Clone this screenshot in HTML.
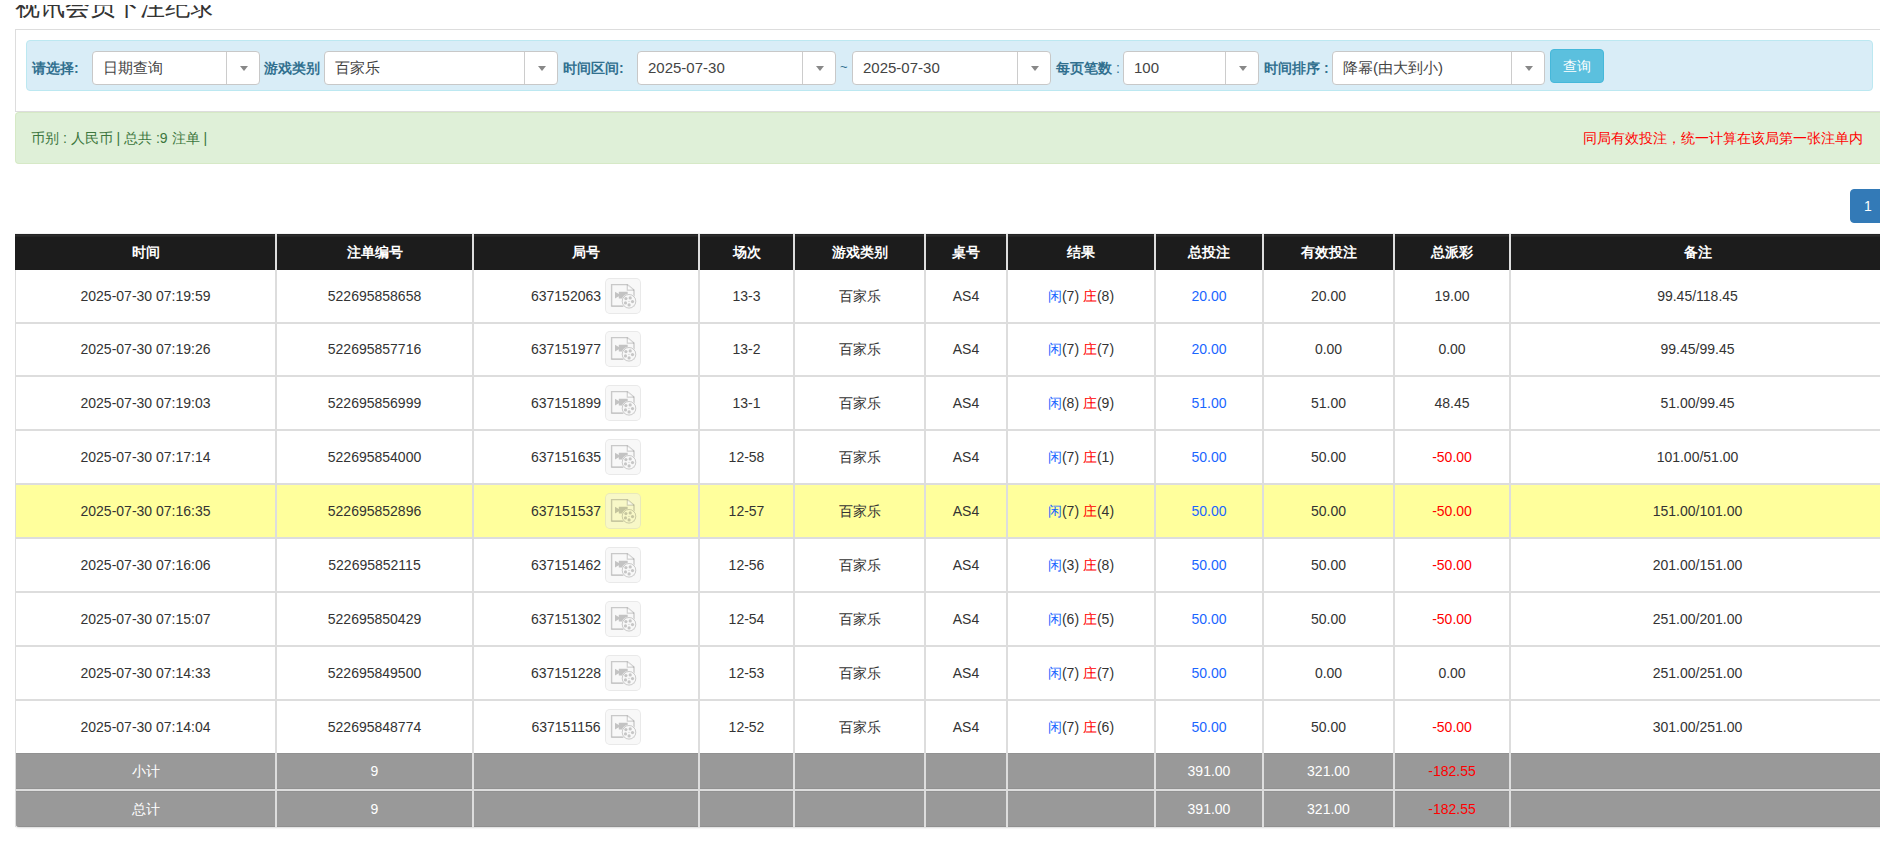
<!DOCTYPE html>
<html><head><meta charset="utf-8">
<style>
html,body{margin:0;padding:0;}
body{width:1880px;height:845px;overflow:hidden;position:relative;background:#fff;font-family:"Liberation Sans",sans-serif;color:#333;font-size:14px;}
div,span{box-sizing:border-box;}
.a{position:absolute;}
.title{position:absolute;left:15px;top:-10px;font-size:25px;line-height:32px;color:#333;white-space:nowrap;}
.panel{position:absolute;left:15px;top:29px;width:1900px;height:83px;border:1px solid #ddd;border-right:none;background:#fff;}
.bar{position:absolute;left:26px;top:40px;width:1847px;height:51px;background:#d9edf7;border:1px solid #bce8f1;border-radius:4px;}
.lbl{position:absolute;top:59px;font-size:14px;line-height:18px;font-weight:bold;color:#31708f;white-space:nowrap;}
.sel{position:absolute;top:51px;height:34px;background:#fff;border:1px solid #c8c8c8;border-radius:4px;}
.sel .tx{position:absolute;left:10px;top:0;line-height:32px;font-size:15px;color:#444;white-space:nowrap;}
.sel .dv{position:absolute;top:0;bottom:0;width:1px;background:#ccc;}
.sel .ar{position:absolute;top:14px;width:0;height:0;border-left:4px solid transparent;border-right:4px solid transparent;border-top:5px solid #888;}
.btn{position:absolute;left:1550px;top:49px;width:54px;height:34px;background:#5bc0de;border:1px solid #46b8da;border-radius:4px;color:#fff;font-size:14px;line-height:32px;text-align:center;}
.alert{position:absolute;left:15px;top:112px;width:1900px;height:52px;background:#dff0d8;border:1px solid #d6e9c6;border-right:none;border-radius:4px 0 0 4px;}
.al{position:absolute;left:31px;top:129px;font-size:14px;line-height:18px;color:#3c763d;white-space:nowrap;}
.ar2{position:absolute;right:18px;top:129px;font-size:14px;line-height:18px;color:#f00;white-space:nowrap;}
.pg{position:absolute;left:1850px;top:189px;width:40px;height:34px;background:#337ab7;border:1px solid #337ab7;border-radius:4px;color:#fff;font-size:14px;line-height:32px;padding-left:13px;}
.th{position:absolute;background:linear-gradient(#232323 0,#232323 1px,#2c2c2c 1px,#2c2c2c 2px,#252525 2px,#252525 3px,#1c1c1c 3px,#1c1c1c 100%);box-shadow:0 -1px 0 #f2f2f2;}
.hc{position:absolute;text-align:center;color:#fff;font-weight:bold;font-size:14px;white-space:nowrap;}
.rb{position:absolute;left:15px;width:1869px;}
.hl{position:absolute;left:15px;width:1869px;height:2px;background:#ddd;}
.vl{position:absolute;width:2px;background:#ddd;}
.vl1{position:absolute;width:1px;background:#ddd;}
.c{position:absolute;text-align:center;white-space:nowrap;font-size:14px;color:#333;}
.c2{}
.ib{display:inline-block;vertical-align:middle;width:36px;height:36px;margin-left:4px;border:1px solid rgba(0,0,0,.06);border-radius:5px;position:relative;top:-1px;background:rgba(241,241,241,.5);}
.ib svg{position:absolute;left:-1px;top:-1px;}
.gr{position:absolute;left:16px;width:1868px;background:#999;border-top:1px solid #919191;}
.gc{position:absolute;text-align:center;color:#fff;font-size:14px;white-space:nowrap;}
.bl{color:#1a66ff;}
.rd{color:#f00;}
</style></head>
<body>
<svg width="0" height="0" style="position:absolute"><defs><mask id="rm" maskUnits="userSpaceOnUse" x="0" y="0" width="36" height="36"><rect x="0" y="0" width="36" height="36" fill="#fff"/><circle cx="24" cy="23.3" r="7.6" fill="#000"/></mask></defs></svg>
<div class="title">视讯会员下注纪录</div>
<div class="a" style="left:0;top:0;width:1880px;height:5px;background:#fff"></div>
<div class="panel"></div>
<div class="bar"></div>

<div class="lbl" style="left:32px">请选择:</div>
<div class="sel" style="left:92px;width:168px"><span class="tx">日期查询</span><span class="dv" style="left:133px"></span><span class="ar" style="left:147px"></span></div>

<div class="lbl" style="left:264px">游戏类别</div>
<div class="sel" style="left:324px;width:234px"><span class="tx">百家乐</span><span class="dv" style="left:199px"></span><span class="ar" style="left:213px"></span></div>

<div class="lbl" style="left:563px">时间区间:</div>
<div class="sel" style="left:637px;width:199px"><span class="tx">2025-07-30</span><span class="dv" style="left:164px"></span><span class="ar" style="left:178px"></span></div>
<div class="a" style="left:840px;top:58px;font-size:13px;line-height:18px;color:#31708f">~</div>
<div class="sel" style="left:852px;width:199px"><span class="tx">2025-07-30</span><span class="dv" style="left:164px"></span><span class="ar" style="left:178px"></span></div>

<div class="lbl" style="left:1056px">每页笔数<span style="font-weight:normal"> :</span></div>
<div class="sel" style="left:1123px;width:136px"><span class="tx">100</span><span class="dv" style="left:101px"></span><span class="ar" style="left:115px"></span></div>

<div class="lbl" style="left:1264px">时间排序 :</div>
<div class="sel" style="left:1332px;width:213px"><span class="tx">降幂(由大到小)</span><span class="dv" style="left:178px"></span><span class="ar" style="left:192px"></span></div>

<div class="btn">查询</div>

<div class="alert"></div>
<div class="al">币别 : 人民币 | 总共 :9 注单 |</div>
<div class="a" style="left:1583px;top:129px;font-size:14px;line-height:18px;color:#f00;white-space:nowrap">同局有效投注，统一计算在该局第一张注单内</div>

<div class="pg">1</div>

<div class="rb" style="top:270px;height:52px;background:#fff"></div>
<div class="rb" style="top:323px;height:52px;background:#fff"></div>
<div class="rb" style="top:377px;height:52px;background:#fff"></div>
<div class="rb" style="top:431px;height:52px;background:#fff"></div>
<div class="rb" style="top:485px;height:52px;background:#ffff9c"></div>
<div class="rb" style="top:539px;height:52px;background:#fff"></div>
<div class="rb" style="top:593px;height:52px;background:#fff"></div>
<div class="rb" style="top:647px;height:52px;background:#fff"></div>
<div class="rb" style="top:701px;height:52px;background:#fff"></div>
<div class="gr" style="top:753px;height:36px;border-bottom:1px solid #919191;"></div>
<div class="gr" style="top:791px;height:36px;border-bottom:1px solid #8f8f8f;border-radius:0 0 0 3px;box-shadow:0 1px 2px rgba(0,0,0,.15);"></div>
<div class="hl" style="top:322px"></div>
<div class="hl" style="top:375px"></div>
<div class="hl" style="top:429px"></div>
<div class="hl" style="top:483px"></div>
<div class="hl" style="top:537px"></div>
<div class="hl" style="top:591px"></div>
<div class="hl" style="top:645px"></div>
<div class="hl" style="top:699px"></div>
<div class="th" style="left:15px;top:234px;width:1869px;height:36px"></div>
<div class="hc" style="left:16px;top:234px;width:259px;height:36px;line-height:36px">时间</div>
<div class="hc" style="left:277px;top:234px;width:195px;height:36px;line-height:36px">注单编号</div>
<div class="hc" style="left:474px;top:234px;width:224px;height:36px;line-height:36px">局号</div>
<div class="hc" style="left:700px;top:234px;width:93px;height:36px;line-height:36px">场次</div>
<div class="hc" style="left:795px;top:234px;width:129px;height:36px;line-height:36px">游戏类别</div>
<div class="hc" style="left:926px;top:234px;width:80px;height:36px;line-height:36px">桌号</div>
<div class="hc" style="left:1008px;top:234px;width:146px;height:36px;line-height:36px">结果</div>
<div class="hc" style="left:1156px;top:234px;width:106px;height:36px;line-height:36px">总投注</div>
<div class="hc" style="left:1264px;top:234px;width:129px;height:36px;line-height:36px">有效投注</div>
<div class="hc" style="left:1395px;top:234px;width:114px;height:36px;line-height:36px">总派彩</div>
<div class="hc" style="left:1511px;top:234px;width:373px;height:36px;line-height:36px">备注</div>
<div class="c" style="left:16px;top:270px;width:259px;height:52px;line-height:52px">2025-07-30 07:19:59</div>
<div class="c" style="left:277px;top:270px;width:195px;height:52px;line-height:52px">522695858658</div>
<div class="c c2" style="left:474px;top:270px;width:224px;height:52px;line-height:52px">637152063<span class="ib"><svg width="36" height="36" viewBox="0 0 36 36"><g mask="url(#rm)"><path d="M6.6 6.6H22.3L29 12.2V28.1H6.6Z" fill="none" stroke="rgba(0,0,0,.19)" stroke-width="1.4"/><path d="M6.6 28.1H29" stroke="rgba(0,0,0,.07)" stroke-width="1.6"/><path d="M22.3 6.6V12.2H29" fill="rgba(255,255,255,.55)" stroke="rgba(0,0,0,.17)" stroke-width="1.2"/><path d="M10 13.8L13.8 16V13.8H22.7V20.4H13.8V18.2L10 20.4Z" fill="rgba(0,0,0,.21)"/></g><circle cx="24" cy="23.3" r="6.8" fill="none" stroke="rgba(0,0,0,.19)" stroke-width="1"/><g fill="rgba(0,0,0,.2)"><circle cx="20.9" cy="20.6" r="1.6"/><circle cx="25.2" cy="19.9" r="1.6"/><circle cx="27.5" cy="23.6" r="1.6"/><circle cx="24.1" cy="26.9" r="1.6"/><circle cx="20.5" cy="24.9" r="1.6"/><circle cx="24" cy="23.3" r=".6"/></g></svg></span></div>
<div class="c" style="left:700px;top:270px;width:93px;height:52px;line-height:52px">13-3</div>
<div class="c" style="left:795px;top:270px;width:129px;height:52px;line-height:52px">百家乐</div>
<div class="c" style="left:926px;top:270px;width:80px;height:52px;line-height:52px">AS4</div>
<div class="c" style="left:1008px;top:270px;width:146px;height:52px;line-height:52px"><span class="bl">闲</span>(7) <span class="rd">庄</span>(8)</div>
<div class="c bl" style="left:1156px;top:270px;width:106px;height:52px;line-height:52px">20.00</div>
<div class="c" style="left:1264px;top:270px;width:129px;height:52px;line-height:52px">20.00</div>
<div class="c" style="left:1395px;top:270px;width:114px;height:52px;line-height:52px">19.00</div>
<div class="c" style="left:1511px;top:270px;width:373px;height:52px;line-height:52px">99.45/118.45</div>
<div class="c" style="left:16px;top:323px;width:259px;height:52px;line-height:52px">2025-07-30 07:19:26</div>
<div class="c" style="left:277px;top:323px;width:195px;height:52px;line-height:52px">522695857716</div>
<div class="c c2" style="left:474px;top:323px;width:224px;height:52px;line-height:52px">637151977<span class="ib"><svg width="36" height="36" viewBox="0 0 36 36"><g mask="url(#rm)"><path d="M6.6 6.6H22.3L29 12.2V28.1H6.6Z" fill="none" stroke="rgba(0,0,0,.19)" stroke-width="1.4"/><path d="M6.6 28.1H29" stroke="rgba(0,0,0,.07)" stroke-width="1.6"/><path d="M22.3 6.6V12.2H29" fill="rgba(255,255,255,.55)" stroke="rgba(0,0,0,.17)" stroke-width="1.2"/><path d="M10 13.8L13.8 16V13.8H22.7V20.4H13.8V18.2L10 20.4Z" fill="rgba(0,0,0,.21)"/></g><circle cx="24" cy="23.3" r="6.8" fill="none" stroke="rgba(0,0,0,.19)" stroke-width="1"/><g fill="rgba(0,0,0,.2)"><circle cx="20.9" cy="20.6" r="1.6"/><circle cx="25.2" cy="19.9" r="1.6"/><circle cx="27.5" cy="23.6" r="1.6"/><circle cx="24.1" cy="26.9" r="1.6"/><circle cx="20.5" cy="24.9" r="1.6"/><circle cx="24" cy="23.3" r=".6"/></g></svg></span></div>
<div class="c" style="left:700px;top:323px;width:93px;height:52px;line-height:52px">13-2</div>
<div class="c" style="left:795px;top:323px;width:129px;height:52px;line-height:52px">百家乐</div>
<div class="c" style="left:926px;top:323px;width:80px;height:52px;line-height:52px">AS4</div>
<div class="c" style="left:1008px;top:323px;width:146px;height:52px;line-height:52px"><span class="bl">闲</span>(7) <span class="rd">庄</span>(7)</div>
<div class="c bl" style="left:1156px;top:323px;width:106px;height:52px;line-height:52px">20.00</div>
<div class="c" style="left:1264px;top:323px;width:129px;height:52px;line-height:52px">0.00</div>
<div class="c" style="left:1395px;top:323px;width:114px;height:52px;line-height:52px">0.00</div>
<div class="c" style="left:1511px;top:323px;width:373px;height:52px;line-height:52px">99.45/99.45</div>
<div class="c" style="left:16px;top:377px;width:259px;height:52px;line-height:52px">2025-07-30 07:19:03</div>
<div class="c" style="left:277px;top:377px;width:195px;height:52px;line-height:52px">522695856999</div>
<div class="c c2" style="left:474px;top:377px;width:224px;height:52px;line-height:52px">637151899<span class="ib"><svg width="36" height="36" viewBox="0 0 36 36"><g mask="url(#rm)"><path d="M6.6 6.6H22.3L29 12.2V28.1H6.6Z" fill="none" stroke="rgba(0,0,0,.19)" stroke-width="1.4"/><path d="M6.6 28.1H29" stroke="rgba(0,0,0,.07)" stroke-width="1.6"/><path d="M22.3 6.6V12.2H29" fill="rgba(255,255,255,.55)" stroke="rgba(0,0,0,.17)" stroke-width="1.2"/><path d="M10 13.8L13.8 16V13.8H22.7V20.4H13.8V18.2L10 20.4Z" fill="rgba(0,0,0,.21)"/></g><circle cx="24" cy="23.3" r="6.8" fill="none" stroke="rgba(0,0,0,.19)" stroke-width="1"/><g fill="rgba(0,0,0,.2)"><circle cx="20.9" cy="20.6" r="1.6"/><circle cx="25.2" cy="19.9" r="1.6"/><circle cx="27.5" cy="23.6" r="1.6"/><circle cx="24.1" cy="26.9" r="1.6"/><circle cx="20.5" cy="24.9" r="1.6"/><circle cx="24" cy="23.3" r=".6"/></g></svg></span></div>
<div class="c" style="left:700px;top:377px;width:93px;height:52px;line-height:52px">13-1</div>
<div class="c" style="left:795px;top:377px;width:129px;height:52px;line-height:52px">百家乐</div>
<div class="c" style="left:926px;top:377px;width:80px;height:52px;line-height:52px">AS4</div>
<div class="c" style="left:1008px;top:377px;width:146px;height:52px;line-height:52px"><span class="bl">闲</span>(8) <span class="rd">庄</span>(9)</div>
<div class="c bl" style="left:1156px;top:377px;width:106px;height:52px;line-height:52px">51.00</div>
<div class="c" style="left:1264px;top:377px;width:129px;height:52px;line-height:52px">51.00</div>
<div class="c" style="left:1395px;top:377px;width:114px;height:52px;line-height:52px">48.45</div>
<div class="c" style="left:1511px;top:377px;width:373px;height:52px;line-height:52px">51.00/99.45</div>
<div class="c" style="left:16px;top:431px;width:259px;height:52px;line-height:52px">2025-07-30 07:17:14</div>
<div class="c" style="left:277px;top:431px;width:195px;height:52px;line-height:52px">522695854000</div>
<div class="c c2" style="left:474px;top:431px;width:224px;height:52px;line-height:52px">637151635<span class="ib"><svg width="36" height="36" viewBox="0 0 36 36"><g mask="url(#rm)"><path d="M6.6 6.6H22.3L29 12.2V28.1H6.6Z" fill="none" stroke="rgba(0,0,0,.19)" stroke-width="1.4"/><path d="M6.6 28.1H29" stroke="rgba(0,0,0,.07)" stroke-width="1.6"/><path d="M22.3 6.6V12.2H29" fill="rgba(255,255,255,.55)" stroke="rgba(0,0,0,.17)" stroke-width="1.2"/><path d="M10 13.8L13.8 16V13.8H22.7V20.4H13.8V18.2L10 20.4Z" fill="rgba(0,0,0,.21)"/></g><circle cx="24" cy="23.3" r="6.8" fill="none" stroke="rgba(0,0,0,.19)" stroke-width="1"/><g fill="rgba(0,0,0,.2)"><circle cx="20.9" cy="20.6" r="1.6"/><circle cx="25.2" cy="19.9" r="1.6"/><circle cx="27.5" cy="23.6" r="1.6"/><circle cx="24.1" cy="26.9" r="1.6"/><circle cx="20.5" cy="24.9" r="1.6"/><circle cx="24" cy="23.3" r=".6"/></g></svg></span></div>
<div class="c" style="left:700px;top:431px;width:93px;height:52px;line-height:52px">12-58</div>
<div class="c" style="left:795px;top:431px;width:129px;height:52px;line-height:52px">百家乐</div>
<div class="c" style="left:926px;top:431px;width:80px;height:52px;line-height:52px">AS4</div>
<div class="c" style="left:1008px;top:431px;width:146px;height:52px;line-height:52px"><span class="bl">闲</span>(7) <span class="rd">庄</span>(1)</div>
<div class="c bl" style="left:1156px;top:431px;width:106px;height:52px;line-height:52px">50.00</div>
<div class="c" style="left:1264px;top:431px;width:129px;height:52px;line-height:52px">50.00</div>
<div class="c rd" style="left:1395px;top:431px;width:114px;height:52px;line-height:52px">-50.00</div>
<div class="c" style="left:1511px;top:431px;width:373px;height:52px;line-height:52px">101.00/51.00</div>
<div class="c" style="left:16px;top:485px;width:259px;height:52px;line-height:52px">2025-07-30 07:16:35</div>
<div class="c" style="left:277px;top:485px;width:195px;height:52px;line-height:52px">522695852896</div>
<div class="c c2" style="left:474px;top:485px;width:224px;height:52px;line-height:52px">637151537<span class="ib"><svg width="36" height="36" viewBox="0 0 36 36"><g mask="url(#rm)"><path d="M6.6 6.6H22.3L29 12.2V28.1H6.6Z" fill="none" stroke="rgba(0,0,0,.19)" stroke-width="1.4"/><path d="M6.6 28.1H29" stroke="rgba(0,0,0,.07)" stroke-width="1.6"/><path d="M22.3 6.6V12.2H29" fill="rgba(255,255,255,.55)" stroke="rgba(0,0,0,.17)" stroke-width="1.2"/><path d="M10 13.8L13.8 16V13.8H22.7V20.4H13.8V18.2L10 20.4Z" fill="rgba(0,0,0,.21)"/></g><circle cx="24" cy="23.3" r="6.8" fill="none" stroke="rgba(0,0,0,.19)" stroke-width="1"/><g fill="rgba(0,0,0,.2)"><circle cx="20.9" cy="20.6" r="1.6"/><circle cx="25.2" cy="19.9" r="1.6"/><circle cx="27.5" cy="23.6" r="1.6"/><circle cx="24.1" cy="26.9" r="1.6"/><circle cx="20.5" cy="24.9" r="1.6"/><circle cx="24" cy="23.3" r=".6"/></g></svg></span></div>
<div class="c" style="left:700px;top:485px;width:93px;height:52px;line-height:52px">12-57</div>
<div class="c" style="left:795px;top:485px;width:129px;height:52px;line-height:52px">百家乐</div>
<div class="c" style="left:926px;top:485px;width:80px;height:52px;line-height:52px">AS4</div>
<div class="c" style="left:1008px;top:485px;width:146px;height:52px;line-height:52px"><span class="bl">闲</span>(7) <span class="rd">庄</span>(4)</div>
<div class="c bl" style="left:1156px;top:485px;width:106px;height:52px;line-height:52px">50.00</div>
<div class="c" style="left:1264px;top:485px;width:129px;height:52px;line-height:52px">50.00</div>
<div class="c rd" style="left:1395px;top:485px;width:114px;height:52px;line-height:52px">-50.00</div>
<div class="c" style="left:1511px;top:485px;width:373px;height:52px;line-height:52px">151.00/101.00</div>
<div class="c" style="left:16px;top:539px;width:259px;height:52px;line-height:52px">2025-07-30 07:16:06</div>
<div class="c" style="left:277px;top:539px;width:195px;height:52px;line-height:52px">522695852115</div>
<div class="c c2" style="left:474px;top:539px;width:224px;height:52px;line-height:52px">637151462<span class="ib"><svg width="36" height="36" viewBox="0 0 36 36"><g mask="url(#rm)"><path d="M6.6 6.6H22.3L29 12.2V28.1H6.6Z" fill="none" stroke="rgba(0,0,0,.19)" stroke-width="1.4"/><path d="M6.6 28.1H29" stroke="rgba(0,0,0,.07)" stroke-width="1.6"/><path d="M22.3 6.6V12.2H29" fill="rgba(255,255,255,.55)" stroke="rgba(0,0,0,.17)" stroke-width="1.2"/><path d="M10 13.8L13.8 16V13.8H22.7V20.4H13.8V18.2L10 20.4Z" fill="rgba(0,0,0,.21)"/></g><circle cx="24" cy="23.3" r="6.8" fill="none" stroke="rgba(0,0,0,.19)" stroke-width="1"/><g fill="rgba(0,0,0,.2)"><circle cx="20.9" cy="20.6" r="1.6"/><circle cx="25.2" cy="19.9" r="1.6"/><circle cx="27.5" cy="23.6" r="1.6"/><circle cx="24.1" cy="26.9" r="1.6"/><circle cx="20.5" cy="24.9" r="1.6"/><circle cx="24" cy="23.3" r=".6"/></g></svg></span></div>
<div class="c" style="left:700px;top:539px;width:93px;height:52px;line-height:52px">12-56</div>
<div class="c" style="left:795px;top:539px;width:129px;height:52px;line-height:52px">百家乐</div>
<div class="c" style="left:926px;top:539px;width:80px;height:52px;line-height:52px">AS4</div>
<div class="c" style="left:1008px;top:539px;width:146px;height:52px;line-height:52px"><span class="bl">闲</span>(3) <span class="rd">庄</span>(8)</div>
<div class="c bl" style="left:1156px;top:539px;width:106px;height:52px;line-height:52px">50.00</div>
<div class="c" style="left:1264px;top:539px;width:129px;height:52px;line-height:52px">50.00</div>
<div class="c rd" style="left:1395px;top:539px;width:114px;height:52px;line-height:52px">-50.00</div>
<div class="c" style="left:1511px;top:539px;width:373px;height:52px;line-height:52px">201.00/151.00</div>
<div class="c" style="left:16px;top:593px;width:259px;height:52px;line-height:52px">2025-07-30 07:15:07</div>
<div class="c" style="left:277px;top:593px;width:195px;height:52px;line-height:52px">522695850429</div>
<div class="c c2" style="left:474px;top:593px;width:224px;height:52px;line-height:52px">637151302<span class="ib"><svg width="36" height="36" viewBox="0 0 36 36"><g mask="url(#rm)"><path d="M6.6 6.6H22.3L29 12.2V28.1H6.6Z" fill="none" stroke="rgba(0,0,0,.19)" stroke-width="1.4"/><path d="M6.6 28.1H29" stroke="rgba(0,0,0,.07)" stroke-width="1.6"/><path d="M22.3 6.6V12.2H29" fill="rgba(255,255,255,.55)" stroke="rgba(0,0,0,.17)" stroke-width="1.2"/><path d="M10 13.8L13.8 16V13.8H22.7V20.4H13.8V18.2L10 20.4Z" fill="rgba(0,0,0,.21)"/></g><circle cx="24" cy="23.3" r="6.8" fill="none" stroke="rgba(0,0,0,.19)" stroke-width="1"/><g fill="rgba(0,0,0,.2)"><circle cx="20.9" cy="20.6" r="1.6"/><circle cx="25.2" cy="19.9" r="1.6"/><circle cx="27.5" cy="23.6" r="1.6"/><circle cx="24.1" cy="26.9" r="1.6"/><circle cx="20.5" cy="24.9" r="1.6"/><circle cx="24" cy="23.3" r=".6"/></g></svg></span></div>
<div class="c" style="left:700px;top:593px;width:93px;height:52px;line-height:52px">12-54</div>
<div class="c" style="left:795px;top:593px;width:129px;height:52px;line-height:52px">百家乐</div>
<div class="c" style="left:926px;top:593px;width:80px;height:52px;line-height:52px">AS4</div>
<div class="c" style="left:1008px;top:593px;width:146px;height:52px;line-height:52px"><span class="bl">闲</span>(6) <span class="rd">庄</span>(5)</div>
<div class="c bl" style="left:1156px;top:593px;width:106px;height:52px;line-height:52px">50.00</div>
<div class="c" style="left:1264px;top:593px;width:129px;height:52px;line-height:52px">50.00</div>
<div class="c rd" style="left:1395px;top:593px;width:114px;height:52px;line-height:52px">-50.00</div>
<div class="c" style="left:1511px;top:593px;width:373px;height:52px;line-height:52px">251.00/201.00</div>
<div class="c" style="left:16px;top:647px;width:259px;height:52px;line-height:52px">2025-07-30 07:14:33</div>
<div class="c" style="left:277px;top:647px;width:195px;height:52px;line-height:52px">522695849500</div>
<div class="c c2" style="left:474px;top:647px;width:224px;height:52px;line-height:52px">637151228<span class="ib"><svg width="36" height="36" viewBox="0 0 36 36"><g mask="url(#rm)"><path d="M6.6 6.6H22.3L29 12.2V28.1H6.6Z" fill="none" stroke="rgba(0,0,0,.19)" stroke-width="1.4"/><path d="M6.6 28.1H29" stroke="rgba(0,0,0,.07)" stroke-width="1.6"/><path d="M22.3 6.6V12.2H29" fill="rgba(255,255,255,.55)" stroke="rgba(0,0,0,.17)" stroke-width="1.2"/><path d="M10 13.8L13.8 16V13.8H22.7V20.4H13.8V18.2L10 20.4Z" fill="rgba(0,0,0,.21)"/></g><circle cx="24" cy="23.3" r="6.8" fill="none" stroke="rgba(0,0,0,.19)" stroke-width="1"/><g fill="rgba(0,0,0,.2)"><circle cx="20.9" cy="20.6" r="1.6"/><circle cx="25.2" cy="19.9" r="1.6"/><circle cx="27.5" cy="23.6" r="1.6"/><circle cx="24.1" cy="26.9" r="1.6"/><circle cx="20.5" cy="24.9" r="1.6"/><circle cx="24" cy="23.3" r=".6"/></g></svg></span></div>
<div class="c" style="left:700px;top:647px;width:93px;height:52px;line-height:52px">12-53</div>
<div class="c" style="left:795px;top:647px;width:129px;height:52px;line-height:52px">百家乐</div>
<div class="c" style="left:926px;top:647px;width:80px;height:52px;line-height:52px">AS4</div>
<div class="c" style="left:1008px;top:647px;width:146px;height:52px;line-height:52px"><span class="bl">闲</span>(7) <span class="rd">庄</span>(7)</div>
<div class="c bl" style="left:1156px;top:647px;width:106px;height:52px;line-height:52px">50.00</div>
<div class="c" style="left:1264px;top:647px;width:129px;height:52px;line-height:52px">0.00</div>
<div class="c" style="left:1395px;top:647px;width:114px;height:52px;line-height:52px">0.00</div>
<div class="c" style="left:1511px;top:647px;width:373px;height:52px;line-height:52px">251.00/251.00</div>
<div class="c" style="left:16px;top:701px;width:259px;height:52px;line-height:52px">2025-07-30 07:14:04</div>
<div class="c" style="left:277px;top:701px;width:195px;height:52px;line-height:52px">522695848774</div>
<div class="c c2" style="left:474px;top:701px;width:224px;height:52px;line-height:52px">637151156<span class="ib"><svg width="36" height="36" viewBox="0 0 36 36"><g mask="url(#rm)"><path d="M6.6 6.6H22.3L29 12.2V28.1H6.6Z" fill="none" stroke="rgba(0,0,0,.19)" stroke-width="1.4"/><path d="M6.6 28.1H29" stroke="rgba(0,0,0,.07)" stroke-width="1.6"/><path d="M22.3 6.6V12.2H29" fill="rgba(255,255,255,.55)" stroke="rgba(0,0,0,.17)" stroke-width="1.2"/><path d="M10 13.8L13.8 16V13.8H22.7V20.4H13.8V18.2L10 20.4Z" fill="rgba(0,0,0,.21)"/></g><circle cx="24" cy="23.3" r="6.8" fill="none" stroke="rgba(0,0,0,.19)" stroke-width="1"/><g fill="rgba(0,0,0,.2)"><circle cx="20.9" cy="20.6" r="1.6"/><circle cx="25.2" cy="19.9" r="1.6"/><circle cx="27.5" cy="23.6" r="1.6"/><circle cx="24.1" cy="26.9" r="1.6"/><circle cx="20.5" cy="24.9" r="1.6"/><circle cx="24" cy="23.3" r=".6"/></g></svg></span></div>
<div class="c" style="left:700px;top:701px;width:93px;height:52px;line-height:52px">12-52</div>
<div class="c" style="left:795px;top:701px;width:129px;height:52px;line-height:52px">百家乐</div>
<div class="c" style="left:926px;top:701px;width:80px;height:52px;line-height:52px">AS4</div>
<div class="c" style="left:1008px;top:701px;width:146px;height:52px;line-height:52px"><span class="bl">闲</span>(7) <span class="rd">庄</span>(6)</div>
<div class="c bl" style="left:1156px;top:701px;width:106px;height:52px;line-height:52px">50.00</div>
<div class="c" style="left:1264px;top:701px;width:129px;height:52px;line-height:52px">50.00</div>
<div class="c rd" style="left:1395px;top:701px;width:114px;height:52px;line-height:52px">-50.00</div>
<div class="c" style="left:1511px;top:701px;width:373px;height:52px;line-height:52px">301.00/251.00</div>
<div class="gc" style="left:16px;top:753px;width:259px;height:36px;line-height:36px">小计</div>
<div class="gc" style="left:277px;top:753px;width:195px;height:36px;line-height:36px">9</div>
<div class="gc" style="left:474px;top:753px;width:224px;height:36px;line-height:36px"></div>
<div class="gc" style="left:700px;top:753px;width:93px;height:36px;line-height:36px"></div>
<div class="gc" style="left:795px;top:753px;width:129px;height:36px;line-height:36px"></div>
<div class="gc" style="left:926px;top:753px;width:80px;height:36px;line-height:36px"></div>
<div class="gc" style="left:1008px;top:753px;width:146px;height:36px;line-height:36px"></div>
<div class="gc" style="left:1156px;top:753px;width:106px;height:36px;line-height:36px">391.00</div>
<div class="gc" style="left:1264px;top:753px;width:129px;height:36px;line-height:36px">321.00</div>
<div class="gc rd" style="left:1395px;top:753px;width:114px;height:36px;line-height:36px">-182.55</div>
<div class="gc" style="left:1511px;top:753px;width:373px;height:36px;line-height:36px"></div>
<div class="gc" style="left:16px;top:791px;width:259px;height:36px;line-height:36px">总计</div>
<div class="gc" style="left:277px;top:791px;width:195px;height:36px;line-height:36px">9</div>
<div class="gc" style="left:474px;top:791px;width:224px;height:36px;line-height:36px"></div>
<div class="gc" style="left:700px;top:791px;width:93px;height:36px;line-height:36px"></div>
<div class="gc" style="left:795px;top:791px;width:129px;height:36px;line-height:36px"></div>
<div class="gc" style="left:926px;top:791px;width:80px;height:36px;line-height:36px"></div>
<div class="gc" style="left:1008px;top:791px;width:146px;height:36px;line-height:36px"></div>
<div class="gc" style="left:1156px;top:791px;width:106px;height:36px;line-height:36px">391.00</div>
<div class="gc" style="left:1264px;top:791px;width:129px;height:36px;line-height:36px">321.00</div>
<div class="gc rd" style="left:1395px;top:791px;width:114px;height:36px;line-height:36px">-182.55</div>
<div class="gc" style="left:1511px;top:791px;width:373px;height:36px;line-height:36px"></div>
<div class="hl" style="top:789px"></div>
<div class="vl" style="left:275px;top:234px;height:593px"></div>
<div class="vl" style="left:472px;top:234px;height:593px"></div>
<div class="vl" style="left:698px;top:234px;height:593px"></div>
<div class="vl" style="left:793px;top:234px;height:593px"></div>
<div class="vl" style="left:924px;top:234px;height:593px"></div>
<div class="vl" style="left:1006px;top:234px;height:593px"></div>
<div class="vl" style="left:1154px;top:234px;height:593px"></div>
<div class="vl" style="left:1262px;top:234px;height:593px"></div>
<div class="vl" style="left:1393px;top:234px;height:593px"></div>
<div class="vl" style="left:1509px;top:234px;height:593px"></div>
<div class="vl1" style="left:15px;top:270px;height:557px"></div>
</body></html>
